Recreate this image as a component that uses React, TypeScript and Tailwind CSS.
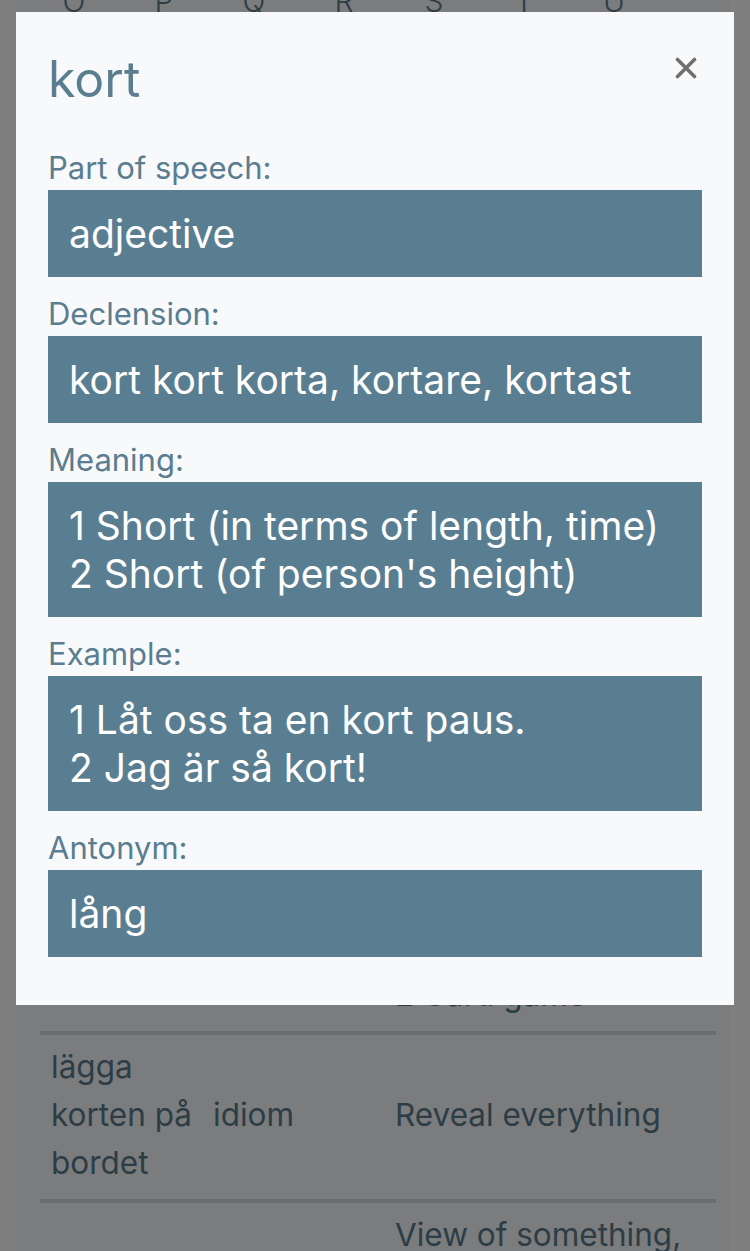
import React from 'react';

const letters = ['O', 'P', 'Q', 'R', 'S', 'T', 'U'];

interface Field {
  label: string;
  lines: string[];
}

const fields: Field[] = [
  { label: 'Part of speech:', lines: ['adjective'] },
  { label: 'Declension:', lines: ['kort kort korta, kortare, kortast'] },
  { label: 'Meaning:', lines: ['1 Short (in terms of length, time)', "2 Short (of person's height)"] },
  { label: 'Example:', lines: ['1 Låt oss ta en kort paus.', '2 Jag är så kort!'] },
  { label: 'Antonym:', lines: ['lång'] },
];

const font = { fontFamily: 'Inter, "Noto Sans", sans-serif' };

// the word list page that sits behind the dialog
const WordTable: React.FC = () => (
  <div className="ml-4 w-[714px] bg-[#f6f8fb] text-[#5b7b8c]">
    <div className="-mt-[14px] flex h-[30px] pl-[13px] text-[30px] leading-[30px] font-light">
      {letters.map((l) => (
        <span key={l} className="w-[90px] text-center">{l}</span>
      ))}
    </div>
    <div className="mx-6 w-[676px] text-[31.5px] leading-[48px]">
      <div className="grid h-[1019px] grid-cols-[162px_182px_1fr] items-start border-b-4 border-[#d7d9dc] pt-3 pb-3">
        <div className="pl-[11px]">kort</div>
        <div className="pl-[11px]">noun</div>
        <div className="self-end pl-[11px]">1 Card<br />2 Card game</div>
      </div>
      <div className="grid grid-cols-[162px_182px_1fr] items-center border-b-4 border-[#d7d9dc] pt-2 pb-3">
        <div className="pl-[11px]">lägga korten på bordet</div>
        <div className="pl-[11px]">idiom</div>
        <div className="pl-[11px]">Reveal everything</div>
      </div>
      <div className="grid grid-cols-[162px_182px_1fr] items-center pt-2 pb-3">
        <div className="pl-[11px]">kortsikt</div>
        <div className="pl-[11px]">noun</div>
        <div className="pl-[11px]">View of something, over a short period of time</div>
      </div>
    </div>
  </div>
);

export default function App() {
  return (
    <div className="relative h-[1251px] w-[750px] overflow-hidden bg-white" style={font}>
      <WordTable />
      <div className="fixed inset-0 bg-black/50 px-4 pt-3">
        <div className="w-[718px] bg-[#f8f9fb] px-8 pb-12">
          <div className="flex items-start justify-between pt-[39px]">
            <h2 className="text-[50px] leading-[57px] text-[#5a7d8f]">kort</h2>
            <button className="mr-[5px] mt-[6px]">
              <svg width="22" height="22" viewBox="0 0 22 22" fill="none" stroke="#707070" strokeWidth="3.6" strokeLinecap="round">
                <path d="M2.5 2.5 19.5 19.5M19.5 2.5 2.5 19.5" />
              </svg>
            </button>
          </div>
          <div className="mt-[23px]">
            {fields.map((f) => (
              <div key={f.label}>
                <div className="pt-[16px] pb-[1px] text-[31px] leading-[42px] text-[#5a7d8f]">{f.label}</div>
                <div className="bg-[#5a7e91] px-[21px] pt-[20px] pb-[19px] text-[39px] leading-[48px] text-white">
                  {f.lines.map((line) => (
                    <div key={line}>{line}</div>
                  ))}
                </div>
              </div>
            ))}
          </div>
        </div>
      </div>
    </div>
  );
}
